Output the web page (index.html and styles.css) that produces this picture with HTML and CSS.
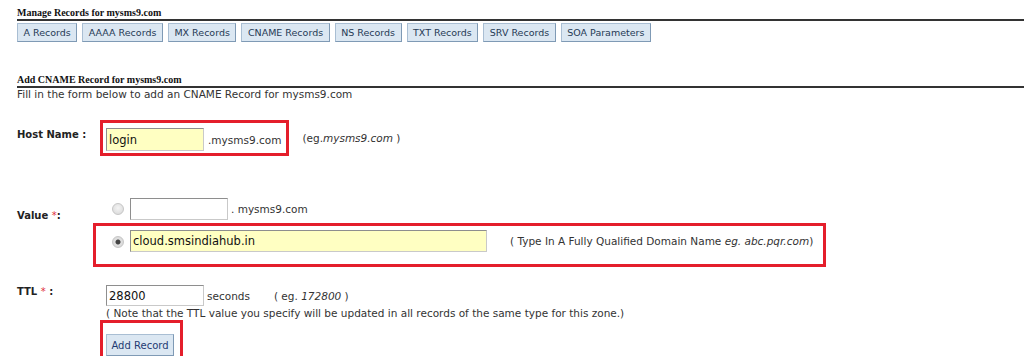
FILE: index.html
```html
<html>
    <head>
        <link rel="stylesheet" href="styles.css">
    </head>
    <body>
        <div class="page">
            <div class="sectiontitle">Manage Records for mysms9.com</div>
            <div class="tabs">
                <button class="tabbutton">A Records</button>
                <button class="tabbutton">AAAA Records</button>
                <button class="tabbutton">MX Records</button>
                <button class="tabbutton">CNAME Records</button>
                <button class="tabbutton">NS Records</button>
                <button class="tabbutton">TXT Records</button>
                <button class="tabbutton">SRV Records</button>
                <button class="tabbutton">SOA Parameters</button>
            </div>

            <div class="sectiontitle second">Add CNAME Record for mysms9.com</div>
            <div class="intro">Fill in the form below to add an CNAME Record for mysms9.com</div>

            <div class="formrow hostrow">
                <div class="label">Host Name :</div>
                <div class="field">
                    <span class="mark hostmark">
                        <input class="textbox yellow" type="text" value="login">
                        <span class="suffix">.mysms9.com</span>
                    </span>
                    <span class="hint">(eg.<i>mysms9.com</i> )</span>
                </div>
            </div>

            <div class="formrow valuerow">
                <div class="label valuelabel">Value <span class="req">*</span>:</div>
                <div class="field column">
                    <div class="option">
                        <input class="radio" type="radio" name="value">
                        <input class="textbox" type="text" value="">
                        <span class="suffix">. mysms9.com</span>
                    </div>
                    <div class="option mark valuemark">
                        <input class="radio" type="radio" name="value" checked>
                        <input class="textbox yellow wide" type="text" value="cloud.smsindiahub.in">
                        <span class="hint fqdn">( Type In A Fully Qualified Domain Name <i>eg. abc.pqr.com</i>)</span>
                    </div>
                </div>
            </div>

            <div class="formrow ttlrow">
                <div class="label">TTL <span class="req">*</span> :</div>
                <div class="field column">
                    <div class="option">
                        <input class="textbox ttlbox" type="text" value="28800">
                        <span class="suffix">seconds</span>
                        <span class="hint ttlhint">( eg. <i>172800</i> )</span>
                    </div>
                    <div class="note">( Note that the TTL value you specify will be updated in all records of the same type for this zone.)</div>
                    <div class="mark submitmark">
                        <button class="submitbutton">Add Record</button>
                    </div>
                </div>
            </div>
        </div>
    </body>
</html>
```

FILE: styles.css
```css
body {
    margin: 0px;
    background-color: white;
    font-family: "DejaVu Sans", Verdana, sans-serif;
    font-size: 10.5px;
    color: #333;
    overflow: hidden;
}
.page {
    padding-left: 17px;
}
.sectiontitle {
    margin-top: 7px;
    font-family: "Liberation Serif", "Times New Roman", serif;
    font-weight: bold;
    font-size: 10px;
    line-height: 12px;
    color: #111;
    border-bottom: 2px solid #333;
}
.sectiontitle.second {
    margin-top: 32px;
}
.tabs {
    display: flex;
    gap: 5px;
    margin-top: 2px;
}
.tabbutton {
    height: 19px;
    padding: 0px 5.5px;
    background-color: #dbe7f2;
    border: 1px solid #a9bed3;
    border-right-color: #7f9ab5;
    border-bottom-color: #7f9ab5;
    color: #263a55;
    font-family: "DejaVu Sans", Tahoma, sans-serif;
    font-size: 9.5px;
    line-height: 17px;
}
.intro {
    line-height: 12px;
    color: #333;
}
.formrow {
    display: flex;
}
.label {
    width: 89px;
    flex-shrink: 0;
    font-weight: bold;
    color: #222;
    font-size: 10px;
}
.req {
    color: #e0303a;
    font-weight: normal;
}
.field {
    display: flex;
    align-items: center;
}
.field.column {
    flex-direction: column;
    align-items: flex-start;
}
.option {
    display: flex;
    align-items: center;
}
.mark {
    border: 3px solid #e41e2b; /* red boxes drawn round the important fields */
}
.textbox {
    box-sizing: border-box;
    width: 98px;
    height: 22px;
    margin: 0px;
    padding: 0px 2px;
    border: 1px solid #c9c9c9;
    border-top-color: #8e8e8e;
    border-left-color: #8e8e8e;
    font-family: "DejaVu Sans", Verdana, sans-serif;
    font-size: 11.5px;
    color: #111;
    background-color: white;
}
.textbox.yellow {
    background-color: #ffffc2;
}
.textbox.wide {
    width: 357px;
}
.suffix {
    margin-left: 3px;
    color: #333;
}
.hint {
    color: #333;
}
.hostrow {
    margin-top: 20px;
}
.hostrow .label {
    padding-top: 9px;
}
.hostmark {
    display: flex;
    align-items: center;
    margin-left: -6px;
    padding: 5px 5px 2px 3px;
    height: 23px;
}
.hostmark .textbox {
    height: 23px;
}
.hostmark .suffix {
    margin-left: 4px;
}
.hostrow .hint {
    margin-left: 13px;
}
.valuerow {
    margin-top: 42px;
}
.valuelabel {
    padding-top: 12px;
}
.radio {
    appearance: none;
    width: 12px;
    height: 12px;
    margin: 0px 6px 0px 6px;
    border-radius: 50%;
    border: 1px solid #c6c6c6;
    background: radial-gradient(circle at 50% 40%, #f4f4f4, #d6d6d6);
    box-sizing: border-box;
}
.radio:checked {
    background: radial-gradient(circle, #444 0px, #444 2px, #e2e2e2 3px, #cfcfcf);
}
.valuemark {
    margin-top: 3px;
    margin-left: -13px;
    width: 717px;
    height: 34px;
    padding-left: 10px;
    align-items: flex-start;
    padding-top: 4px;
    box-sizing: content-box;
}
.valuemark .radio {
    margin-top: 6px;
}
.fqdn {
    margin-left: 23px;
    margin-top: 5px;
}
.ttlrow {
    margin-top: 18px;
}
.ttlrow .label {
    padding-top: 1px;
}
.ttlbox {
    height: 21px;
}
.ttlhint {
    margin-left: 24px;
}
.note {
    margin-top: 1px;
    line-height: 12px;
    color: #333;
}
.submitmark {
    margin-top: 1px;
    margin-left: -6px;
    width: 74px;
    height: 40px;
    padding: 11px 0px 0px 3px;
    box-sizing: content-box;
}
.submitbutton {
    width: 68px;
    height: 22px;
    padding: 0px;
    background-color: #dbe7f2;
    border: 1px solid #a9bed3;
    border-right-color: #7f9ab5;
    border-bottom-color: #7f9ab5;
    color: #1f3b72;
    font-family: "DejaVu Sans", Tahoma, sans-serif;
    font-size: 10px;
}
```
